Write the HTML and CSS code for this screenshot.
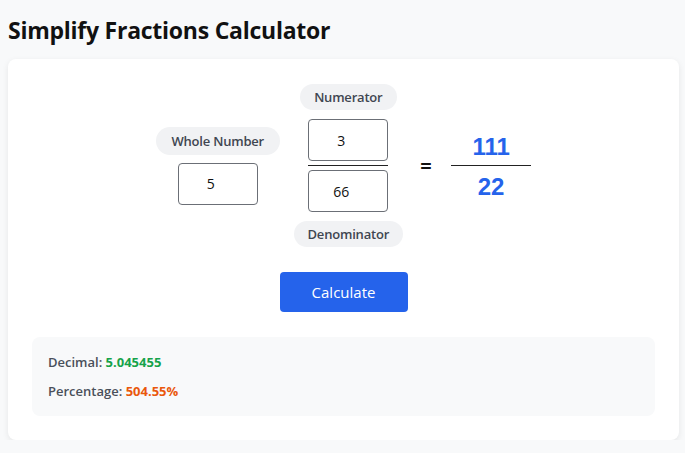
FILE: index.html
```html
<!DOCTYPE html>
<html>
  <head>
    <link rel="stylesheet" href="styles.css">
  </head>
  <body>
    <h1 class="title">Simplify Fractions Calculator</h1>
    <div class="card">
      <div class="fraction-row">
        <div class="whole-group">
          <span class="pill pill-whole">Whole Number</span>
          <input class="num-input" type="text" value="5" />
        </div>
        <div class="fraction-group">
          <span class="pill">Numerator</span>
          <input class="num-input" type="text" value="3" />
          <div class="bar"></div>
          <input class="num-input" type="text" value="66" />
          <span class="pill">Denominator</span>
        </div>
        <div class="equals">=</div>
        <div class="result">
          <div class="result-num">111</div>
          <div class="result-bar"></div>
          <div class="result-num">22</div>
        </div>
      </div>
      <div class="actions">
        <button class="calc-btn" type="button">Calculate</button>
      </div>
      <div class="output">
        <p class="output-line">Decimal: <span class="val-decimal">5.045455</span></p>
        <p class="output-line">Percentage: <span class="val-percent">504.55%</span></p>
      </div>
    </div>
  </body>
</html>
```

FILE: styles.css
```css
body {
  margin: 0;
  padding: 0 6px 0 8px;
  background: #f8f9fa;
  font-family: "Open Sans", "Noto Sans", sans-serif;
  color: #111;
}

.title {
  margin: 0;
  padding: 12px 0 11px;
  font-size: 23px;
  line-height: 36px;
  font-weight: 700;
  letter-spacing: -0.25px;
}

.card {
  background: #fff;
  border-radius: 8px;
  box-shadow: 0 2px 6px rgba(0, 0, 0, 0.08);
  padding: 25px 24px 24px;
}

.fraction-row {
  display: flex;
  justify-content: center;
  align-items: center;
}

.whole-group,
.fraction-group {
  display: flex;
  flex-direction: column;
  align-items: center;
}

.whole-group {
  gap: 8px;
  margin-right: 14px;
}

.pill {
  display: inline-block;
  background: #f1f2f4;
  color: #3f4651;
  border-radius: 14px;
  padding: 0 14px;
  height: 26px;
  line-height: 26px;
  font-size: 13px;
  font-weight: 600;
  letter-spacing: -0.2px;
}

.pill-whole {
  height: 28px;
  line-height: 28px;
  padding: 0 15.5px;
}

.fraction-group .pill:first-child {
  margin-bottom: 9px;
}

.fraction-group .pill:last-child {
  margin-top: 9px;
}

.num-input {
  box-sizing: border-box;
  width: 80px;
  height: 42px;
  border: 1px solid #6b6f76;
  border-radius: 4px;
  padding: 0 14px 0 0;
  text-align: center;
  font-family: "Open Sans", "Noto Sans", sans-serif;
  font-size: 14px;
  color: #111;
  background: #fff;
}

.bar {
  width: 80px;
  height: 1px;
  background: #222;
  margin: 4px 0;
}

.equals {
  margin: 0 19px 0 17px;
  font-size: 20px;
  font-weight: 700;
  width: 12px;
  text-align: center;
}

.result {
  width: 80px;
  padding-top: 2px;
  display: flex;
  flex-direction: column;
  align-items: center;
}

.result-num {
  font-family: "Liberation Sans", Arial, sans-serif;
  font-weight: 700;
  font-size: 24px;
  line-height: 30px;
  color: #2563eb;
}

.result-bar {
  width: 80px;
  height: 1px;
  background: #222;
  margin: 3px 0 6px;
}

.actions {
  display: flex;
  justify-content: center;
  margin-top: 25px;
}

.calc-btn {
  width: 128px;
  height: 40px;
  border: 0;
  border-radius: 4px;
  background: #2563eb;
  color: #fff;
  font-family: "Open Sans", "Noto Sans", sans-serif;
  font-size: 15px;
}

.output {
  margin-top: 25px;
  background: #f8f9fa;
  border-radius: 8px;
  padding: 15px 16px;
}

.output-line {
  margin: 0;
  font-size: 13px;
  line-height: 20px;
  font-weight: 600;
  color: #4a505a;
}

.output-line + .output-line {
  margin-top: 9px;
}

.val-decimal {
  color: #16a34a;
  font-weight: 700;
}

.val-percent {
  color: #ea580c;
  font-weight: 700;
}
```
